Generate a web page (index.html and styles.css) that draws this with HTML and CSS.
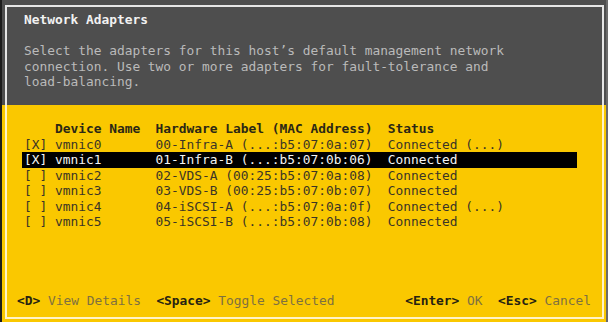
FILE: index.html
```html
<!DOCTYPE html>
<html lang="en">
<head>
  <meta charset="UTF-8" />
  <title>Network Adapters</title>
  <link rel="stylesheet" href="styles.css">
</head>
<body>
  <div class="screen">
    <section class="top">
      <div class="top-frame">
        <h1 class="title">Network Adapters</h1>
        <p class="desc">Select the adapters for this host’s default management network
connection. Use two or more adapters for fault-tolerance and
load-balancing.</p>
      </div>
    </section>

    <section class="bottom">
      <div class="bottom-frame">
        <div class="list">
          <div class="row head">    Device Name  Hardware Label (MAC Address)  Status</div>
          <div class="row">[X] vmnic0       00-Infra-A (...:b5:07:0a:07)  Connected (...)</div>
          <div class="row selected">[X] vmnic1       01-Infra-B (...:b5:07:0b:06)  Connected</div>
          <div class="row">[ ] vmnic2       02-VDS-A (00:25:b5:07:0a:08)  Connected</div>
          <div class="row">[ ] vmnic3       03-VDS-B (00:25:b5:07:0b:07)  Connected</div>
          <div class="row">[ ] vmnic4       04-iSCSI-A (...:b5:07:0a:0f)  Connected (...)</div>
          <div class="row">[ ] vmnic5       05-iSCSI-B (...:b5:07:0b:08)  Connected</div>
        </div>

        <div class="keys">
          <div class="key-group"><span class="key">&lt;D&gt;</span> View Details  <span class="key">&lt;Space&gt;</span> Toggle Selected</div>
          <div class="key-group"><span class="key">&lt;Enter&gt;</span> OK  <span class="key">&lt;Esc&gt;</span> Cancel</div>
        </div>
      </div>
    </section>
  </div>
</body>
</html>
```

FILE: styles.css
```css
* {
  box-sizing: border-box;
}

body {
  margin: 0;
  padding: 0;
  width: 608px;
  height: 322px;
  overflow: hidden;
  font-family: 'DejaVu Sans Mono', 'Liberation Mono', monospace;
  font-size: 12.87px;
  line-height: 15.5px;
}

.screen {
  display: flex;
  flex-direction: column;
  height: 322px;
  border-left: 2px solid #1c1c1c;
  border-right: 2px solid #6a6a6a;
}

/* grey header area */
.top {
  background-color: #4e4e4e;
  height: 105px;
  padding: 5px 2px 0 3px;
}

.top-frame {
  height: 100%;
  border: 2px solid #e6e6e6;
  border-bottom: none;
  padding: 5px 17px 0 17px;
}

.title {
  margin: 0;
  font-size: 12.87px;
  font-weight: bold;
  color: #f2f2f2;
}

.desc {
  margin: 15.5px 0 0 0;
  white-space: pre;
  color: #bababa;
}

/* yellow list area */
.bottom {
  flex: 1;
  background-color: #fac800;
  padding: 0 2px 3px 3px;
}

.bottom-frame {
  height: 100%;
  display: flex;
  flex-direction: column;
  border: 2px solid #fff3c8;
  border-top: none;
  padding: 16px 11px 9px 10px;
}

.list {
  margin-left: 5px;
  width: 555px;
}

.row {
  white-space: pre;
  padding-left: 2px;
  color: #3a3526;
}

.row.head {
  color: #2b2715;
  font-weight: bold;
}

.row.selected {
  background-color: #000;
  color: #f4f4f4;
}

.keys {
  margin-top: auto;
  display: flex;
  justify-content: space-between;
  white-space: pre;
  color: #7e7040;
}

.key {
  color: #262212;
  font-weight: bold;
}
```
